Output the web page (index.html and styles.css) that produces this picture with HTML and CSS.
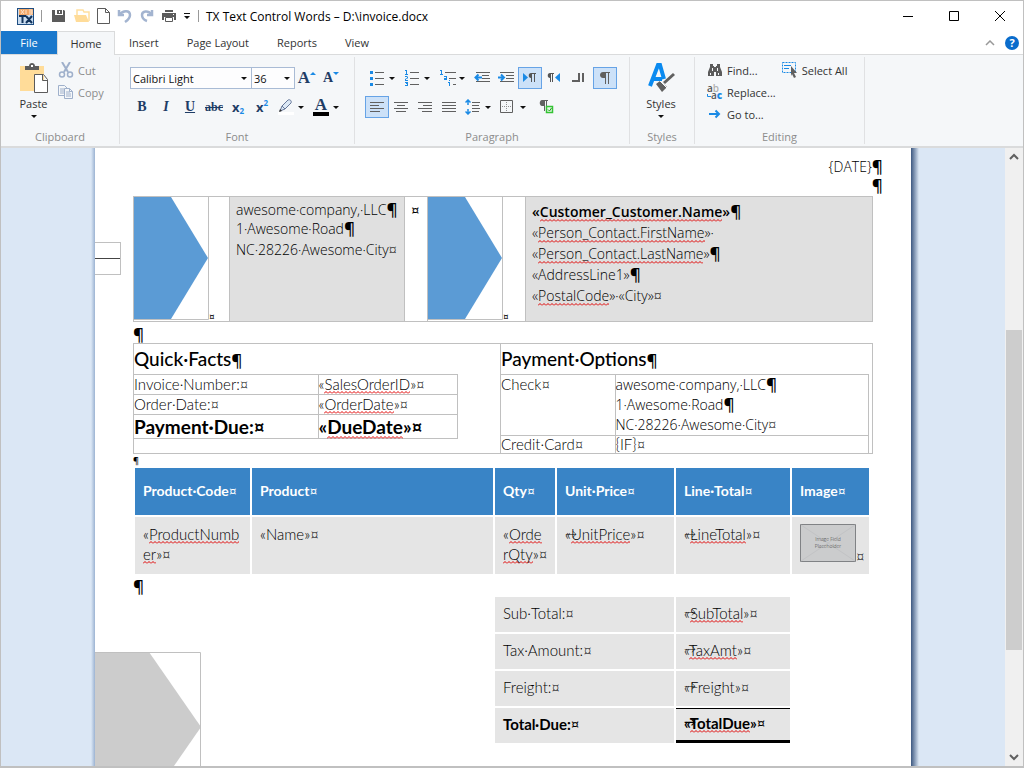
FILE: index.html
```html
<!DOCTYPE html>
<html lang="en">
  <head>
    <meta charset="utf-8" />
    <meta name="viewport" content="width=device-width, initial-scale=1.0" />
    <title>TX Text Control Words</title>
    <link rel="stylesheet" href="styles.css">
  </head>
  <body>
    <div class="window">
      <header class="title-bar">
        <svg class="logo" width="17" height="17" viewBox="0 0 17 17">
          <rect x="0.5" y="0.5" width="16" height="16" fill="#c9dcf0" stroke="#1f4e82" />
          <rect x="2" y="1" width="14" height="6" fill="#f2a868" />
          <path d="M4 2l3 4M7 2L4 6M9 2v4M12 2h3v4h-3M12 4h3" stroke="#fbe3cd" fill="none" />
          <path d="M2 8h7M5.500 8v7M9 8l6 7M15 8l-6 7" stroke="#12345c" stroke-width="2" fill="none" />
        </svg>
        <span class="divider"></span>
        <div class="quick-access">
          <button type="button" aria-label="Save">
            <svg width="16" height="16" viewBox="0 0 16 16"><path d="M1 2h3v5h8V2h1l1 1v11H1zM6 2h5v4H6z" fill="#5b5b5b" /><path d="M8 3h1v2H8z" fill="#fff" /></svg>
          </button>
          <button type="button" aria-label="Open">
            <svg width="18" height="16" viewBox="0 0 18 16"><path d="M4 7V2h6l1 2h5v9" fill="none" stroke="#ffe0a0" stroke-width="1.500" /><path d="M1 7h12l3 7H3z" fill="#ffdc99" /></svg>
          </button>
          <button type="button" aria-label="New">
            <svg width="14" height="16" viewBox="0 0 14 16"><path d="M.5 .5h8l4 4v11H.5zM8.500 .5v4h4" fill="#fff" stroke="#5b5b5b" /></svg>
          </button>
          <button type="button" aria-label="Undo">
            <svg width="16" height="16" viewBox="0 0 16 16"><path d="M2 2v5h5M2.500 6.500C6 2 13 2 13 7c0 3-2 5-5 7" fill="none" stroke="#a3b4d0" stroke-width="2.500" /></svg>
          </button>
          <button type="button" aria-label="Redo">
            <svg width="16" height="16" viewBox="0 0 16 16"><path d="M13 2v5H8M12.500 6.500C9 2 3 3 3 7c0 3 2 5 5 6" fill="none" stroke="#a3b4d0" stroke-width="2.500" /></svg>
          </button>
          <button type="button" aria-label="Print">
            <svg width="16" height="16" viewBox="0 0 16 16"><path d="M4 2h8v2H4zM1 5h14v7h-2V9H3v3H1z" fill="#5b5b5b" /><path d="M4.500 9.500h7v4h-7z" fill="#fff" stroke="#5b5b5b" /><path d="M12 6h1v1h-1z" fill="#fff" /></svg>
          </button>
          <button type="button" aria-label="Customize">
            <svg width="8" height="8" viewBox="0 0 8 8"><path d="M1 1h6v1H1zM1 4h6L4 7z" fill="#111" /></svg>
          </button>
        </div>
        <span class="divider"></span>
        <h1>TX Text Control Words – D:\invoice.docx</h1>
        <div class="window-buttons">
          <button type="button" aria-label="Minimize"><svg width="10" height="10"><path d="M0 5.500h10" stroke="#000" /></svg></button>
          <button type="button" aria-label="Maximize"><svg width="10" height="10"><path d="M.5 .5h9v9h-9z" fill="none" stroke="#000" /></svg></button>
          <button type="button" aria-label="Close"><svg width="10" height="10"><path d="M0 0l10 10M10 0L0 10" stroke="#000" /></svg></button>
        </div>
      </header>

      <nav class="tabs">
        <button type="button" class="file-tab">File</button>
        <button type="button" class="home-tab">Home</button>
        <button type="button">Insert</button>
        <button type="button">Page Layout</button>
        <button type="button">Reports</button>
        <button type="button">View</button>
        <div class="tabs-end">
          <button type="button" aria-label="Collapse ribbon"><svg width="10" height="6"><path d="M1 5l4-4 4 4" fill="none" stroke="#999" stroke-width="1.500" /></svg></button>
          <button type="button" class="help" aria-label="Help">?</button>
        </div>
      </nav>

      <div class="ribbon">
        <section class="group clipboard">
          <div class="group-body">
            <button type="button" class="big">
              <svg width="30" height="32" viewBox="0 0 30 32">
                <path d="M1 4h24v25H1z" fill="#ffdc99" />
                <path d="M6 4h4c0-4 6-4 6 0h4v4H6z" fill="#5b5b5b" /><path d="M12 3h2v2h-2z" fill="#fff" />
                <path d="M15.500 12.500h9l4 5v13h-13zM23.500 12.500v6h5" fill="#fff" stroke="#5b5b5b" />
              </svg>
              Paste
              <i class="caret"></i>
            </button>
            <div class="stack disabled">
              <button type="button" disabled>
                <svg width="16" height="16" viewBox="0 0 16 16"><path d="M4 0l6 10M12 0L6 10" stroke="#9fb0cb" stroke-width="2" /><circle cx="4" cy="12.500" r="2.500" fill="none" stroke="#9fb0cb" stroke-width="1.500" /><circle cx="12" cy="12.500" r="2.500" fill="none" stroke="#9fb0cb" stroke-width="1.500" /></svg>
                Cut
              </button>
              <button type="button" disabled>
                <svg width="16" height="16" viewBox="0 0 16 16"><path d="M.5 1.500h6l3 3v7h-9zM2 5h4M2 7h4M2 9h4" fill="#f5f7f9" stroke="#9fb0cb" /><path d="M6.500 4.500h5l3 3v7h-8zM8 8h4M8 10h5M8 12h5M11.500 4.500v3h3" fill="#f5f7f9" stroke="#9fb0cb" /></svg>
                Copy
              </button>
            </div>
          </div>
          <h2>Clipboard</h2>
        </section>

        <section class="group font">
          <div class="group-body rows">
            <div class="row">
              <div class="combos">
                <select class="font-name" aria-label="Font"><option>Calibri Light</option></select>
                <select class="font-size" aria-label="Font size"><option>36</option></select>
              </div>
              <div class="tools">
                <button type="button" class="tool glyph grow" aria-label="Grow font">A<svg width="6" height="4"><path d="M0 3l3-3 3 3z" fill="#1a8ae5" /></svg></button>
                <button type="button" class="tool glyph shrink" aria-label="Shrink font">A<svg width="6" height="4"><path d="M0 0h6L3 3z" fill="#1a8ae5" /></svg></button>
              </div>
            </div>
            <div class="row">
              <button type="button" class="tool glyph">B</button>
              <button type="button" class="tool glyph italic">I</button>
              <button type="button" class="tool glyph underline">U</button>
              <button type="button" class="tool glyph strike">abc</button>
              <button type="button" class="tool glyph script" aria-label="Subscript">x<sub>2</sub></button>
              <button type="button" class="tool glyph script" aria-label="Superscript">x<sup>2</sup></button>
              <button type="button" class="split" aria-label="Highlight color">
                <svg width="16" height="16" viewBox="0 0 16 16"><path d="M0 13h16v3H0z" fill="#fff" /><path d="M2 12l2-5 6-6c2-1 4 1 3 3L7 10z" fill="#dce8f5" stroke="#66789a" /><path d="M4 7l3 3" stroke="#66789a" /><path d="M1 13l1-3 2 2z" fill="#333" /></svg>
                <i class="caret"></i>
              </button>
              <button type="button" class="split" aria-label="Font color">
                <span class="glyph font-color">A</span>
                <i class="caret"></i>
              </button>
            </div>
          </div>
          <h2>Font</h2>
        </section>

        <section class="group paragraph">
          <div class="group-body rows">
            <div class="row">
              <button type="button" class="split" aria-label="Bullets">
                <svg width="16" height="16" viewBox="0 0 16 16"><path d="M6 2.500h9M6 8.500h9M6 14.500h9" stroke="#606060" /><path d="M1 1h3v3H1zM1 7h3v3H1zM1 13h3v3H1z" fill="#1a8ae5" /></svg>
                <i class="caret"></i>
              </button>
              <button type="button" class="split" aria-label="Numbering">
                <svg width="16" height="16" viewBox="0 0 16 16"><path d="M6 2.500h9M6 8.500h9M6 14.500h9" stroke="#606060" /><path d="M1 0h2v4h1v1H1V4h1V1H1zM1 6h2l1 1v1L3 9H2v1h2v1H1V9l2-1V7H1zM1 12h3v4H1v-1h2v-1H2v-1H1z" fill="#1a8ae5" /></svg>
                <i class="caret"></i>
              </button>
              <button type="button" class="split" aria-label="Multilevel list">
                <svg width="18" height="16" viewBox="0 0 18 16"><path d="M6 2.500h11M10 8.500h7M14 14.500h3" stroke="#606060" /><path d="M1 0h2v4h1v1H1V4h1V1H1zM5 6h3v4H5V8h2V7H5zM10 10h1v1h-1zM9 12h2v4h-1v-3H9z" fill="#1a8ae5" /></svg>
                <i class="caret"></i>
              </button>
              <div class="tools">
                <button type="button" class="tool" aria-label="Decrease indent">
                  <svg width="16" height="12" viewBox="0 0 16 12"><path d="M2 .5h14M8 3.500h7M8 6.500h8M2 9.500h14" stroke="#606060" /><path d="M8 5.500H2M4.500 2.500l-3 3 3 3" fill="none" stroke="#1a8ae5" stroke-width="2" /></svg>
                </button>
                <button type="button" class="tool" aria-label="Increase indent">
                  <svg width="16" height="12" viewBox="0 0 16 12"><path d="M2 .5h14M8 3.500h8M8 6.500h8M2 9.500h14" stroke="#606060" /><path d="M0 5.500h6M3 2.500l3 3-3 3" fill="none" stroke="#1a8ae5" stroke-width="2" /></svg>
                </button>
                <button type="button" class="tool active" aria-label="Left to right">
                  <svg width="14" height="10" viewBox="0 0 14 10"><path d="M0 0l5 4.500L0 9z" fill="#1a8ae5" /><path d="M13 .5H8.500V9M11.500 1v8" fill="none" stroke="#555" /><path d="M9 0H8C5 0 5 5 8 5h1z" fill="#555" /></svg>
                </button>
                <button type="button" class="tool" aria-label="Right to left">
                  <svg width="14" height="10" viewBox="0 0 14 10"><path d="M13 0L8 4.500 13 9z" fill="#1a8ae5" /><path d="M7 .5H3.500V9M5.500 1v8" fill="none" stroke="#555" /><path d="M4 0H3C0 0 0 5 3 5h1z" fill="#555" /></svg>
                </button>
                <button type="button" class="tool" aria-label="Tabs">
                  <svg width="12" height="10" viewBox="0 0 12 10"><path d="M0 8h7V0M11 0v9" fill="none" stroke="#606060" stroke-width="2" /></svg>
                </button>
              </div>
              <button type="button" class="tool active last" aria-label="Show marks">
                <svg width="12" height="14" viewBox="0 0 12 14"><path d="M11 1.500H5M6.500 2v11M9.500 2v11" stroke="#606060" fill="none" /><path d="M7 1H4C0 1 0 7 4 7h3z" fill="#606060" /></svg>
              </button>
            </div>
            <div class="row">
              <button type="button" class="tool active" aria-label="Align left"><svg width="15" height="12"><path d="M0 1.500h14M0 4.500h9M0 7.500h14M0 10.500h10" stroke="#606060" /></svg></button>
              <button type="button" class="tool" aria-label="Center"><svg width="15" height="12"><path d="M0 1.500h14M3 4.500h8M0 7.500h14M2 10.500h10" stroke="#606060" /></svg></button>
              <button type="button" class="tool" aria-label="Align right"><svg width="15" height="12"><path d="M0 1.500h14M5 4.500h9M0 7.500h14M4 10.500h10" stroke="#606060" /></svg></button>
              <button type="button" class="tool" aria-label="Justify"><svg width="15" height="12"><path d="M0 1.500h14M0 4.500h14M0 7.500h14M0 10.500h14" stroke="#606060" /></svg></button>
              <button type="button" class="split" aria-label="Line spacing">
                <svg width="16" height="16" viewBox="0 0 16 16"><path d="M7 3.500h8M7 6.500h7M7 9.500h8M7 12.500h7" stroke="#606060" /><path d="M3 1v5M3 10v5M.5 3.500L3 1l2.500 2.500M.5 12.500L3 15l2.500-2.500" fill="none" stroke="#1a8ae5" stroke-width="1.500" /></svg>
                <i class="caret"></i>
              </button>
              <button type="button" class="split" aria-label="Borders">
                <svg width="14" height="14" viewBox="0 0 14 14"><path d="M.5 .5h12v12H.5z" fill="none" stroke="#606060" /><path d="M6.500 2v10M2 6.500h10" stroke="#909090" stroke-dasharray="1 1" /></svg>
                <i class="caret"></i>
              </button>
              <button type="button" class="tool last" aria-label="Paragraph dialog">
                <svg width="15" height="14" viewBox="0 0 15 14"><path d="M9 .5H4M5.500 1v10M7.500 1v5" stroke="#606060" /><path d="M5 0H3C0 0 0 6 3 6h2z" fill="#606060" /><path d="M7.500 6.500h6v6h-6z" fill="#e6f8e6" stroke="#34c334" stroke-width="1.500" /><path d="M9 9.500l1.500 1.500 2-3" fill="none" stroke="#1f9a1f" /></svg>
              </button>
            </div>
          </div>
          <h2>Paragraph</h2>
        </section>

        <section class="group styles">
          <div class="group-body">
            <button type="button" class="big">
              <svg width="30" height="32" viewBox="0 0 30 32">
                <path d="M4 24L12 3h2l4 14M7 17h9" fill="none" stroke="#0a8af0" stroke-width="4" />
                <path d="M28 12L18 21" stroke="#606060" stroke-width="3" /><path d="M13 20l7 7M10 22l4-3 7 6-5 5z" fill="#606060" />
                <path d="M14 19l7 7" stroke="#f5f7f9" />
              </svg>
              Styles
              <i class="caret"></i>
            </button>
          </div>
          <h2>Styles</h2>
        </section>

        <section class="group editing">
          <div class="group-body">
            <div class="stack">
              <button type="button">
                <svg width="16" height="16" viewBox="0 0 16 16"><path d="M3 2h3v2h1v1h2V4h1V2h3v3l2 5v4H9v-4H7v4H1v-4l2-5z" fill="#5b5b5b" /><path d="M3.500 11v2M11.500 11v2M5.500 6v3M10.500 6v3" stroke="#f5f7f9" /></svg>
                Find...
              </button>
              <button type="button">
                <span class="replace-icon"><span>a<i>b</i></span><span><svg width="4" height="5"><path d="M.5 0v2.500H4" fill="none" stroke="#1a8ae5" /></svg>a<b>c</b></span></span>
                Replace...
              </button>
              <button type="button">
                <svg width="16" height="16" viewBox="0 0 16 16"><path d="M2 8h9M8.500 4.500L12 8l-3.500 3.500" fill="none" stroke="#1a8ae5" stroke-width="2" /></svg>
                Go to...
              </button>
            </div>
            <div class="stack">
              <button type="button">
                <svg width="16" height="16" viewBox="0 0 16 16"><path d="M.5 .5h13v10H.5z" fill="none" stroke="#1a8ae5" stroke-dasharray="2 1" /><path d="M2 3.500h7M2 6.500h5" stroke="#1a8ae5" /><path d="M9 4l6 7h-3l2 4-2 1-2-4-1 2z" fill="#606060" /></svg>
                Select All
              </button>
            </div>
          </div>
          <h2>Editing</h2>
        </section>
      </div>

      <main class="workspace">
        <div class="canvas">
          <article class="page">
            <p class="date">{DATE}<b class="mark">¶</b></p>
            <p class="date"><b class="mark">¶</b></p>

            <div class="frame-mark"></div>

            <table class="addresses">
              <colgroup><col class="arrow-col"><col class="from-col"><col class="gap-col"><col class="arrow-col wide"><col></colgroup>
              <tr>
                <td class="picture">
                  <svg width="75" height="123" viewBox="0 0 75 123"><path d="M0 0h37l37 61-37 61H0z" fill="#5b9bd5" /><path d="M74.500 0v122.500H0" fill="none" stroke="#c0c0c0" /></svg><span class="small">¤</span>
                </td>
                <td class="shaded from">
                  <p>awesome·company,·LLC<b class="mark">¶</b></p>
                  <p>1·Awesome·Road<b class="mark">¶</b></p>
                  <p>NC·28226·Awesome·City¤</p>
                </td>
                <td class="gap">¤</td>
                <td class="picture">
                  <svg width="75" height="123" viewBox="0 0 75 123"><path d="M0 0h37l37 61-37 61H0z" fill="#5b9bd5" /><path d="M74.500 0v122.500H0" fill="none" stroke="#c0c0c0" /></svg><span class="small">¤</span>
                </td>
                <td class="shaded to">
                  <p><b>«<u>Customer_Customer.Name</u>»</b><b class="mark">¶</b></p>
                  <p>«<u>Person_Contact.FirstName</u>»·</p>
                  <p>«<u>Person_Contact.LastName</u>»<b class="mark">¶</b></p>
                  <p>«AddressLine1»<b class="mark">¶</b></p>
                  <p>«<u>PostalCode</u>»·«City»¤</p>
                </td>
              </tr>
            </table>

            <p class="blank"><b class="mark">¶</b></p>

            <table class="facts">
              <colgroup><col class="facts-col"><col></colgroup>
              <tr>
                <td>
                  <h3>Quick·Facts<b class="mark">¶</b></h3>
                  <table class="inner quick">
                    <colgroup><col class="quick-label"><col></colgroup>
                    <tr><td>Invoice·Number:¤</td><td>«<u>SalesOrderID</u>»¤</td></tr>
                    <tr><td>Order·Date:¤</td><td>«<u>OrderDate</u>»¤</td></tr>
                    <tr class="due"><td>Payment·Due:¤</td><td>«<u>DueDate</u>»¤</td></tr>
                  </table>
                </td>
                <td>
                  <h3>Payment·Options<b class="mark">¶</b></h3>
                  <table class="inner options">
                    <colgroup><col class="option-label"><col></colgroup>
                    <tr>
                      <td>Check¤</td>
                      <td class="address">
                        <p>awesome·company,·LLC<b class="mark">¶</b></p>
                        <p>1·Awesome·Road<b class="mark">¶</b></p>
                        <p>NC·28226·Awesome·City¤</p>
                      </td>
                    </tr>
                    <tr><td>Credit·Card¤</td><td>{IF}¤</td></tr>
                  </table>
                </td>
              </tr>
            </table>

            <p class="blank tiny"><b class="mark">¶</b></p>

            <table class="items">
              <colgroup><col class="code-col"><col><col class="qty-col"><col class="price-col"><col class="total-col"><col class="image-col"></colgroup>
              <tr>
                <th>Product·Code<i>¤</i></th>
                <th>Product<i>¤</i></th>
                <th>Qty<i>¤</i></th>
                <th>Unit·Price<i>¤</i></th>
                <th>Line·Total<i>¤</i></th>
                <th>Image<i>¤</i></th>
              </tr>
              <tr>
                <td>«<u>ProductNumb</u><br><u>er</u>»¤</td>
                <td>«Name»¤</td>
                <td>«<u>Orde</u><br><u>rQty</u>»¤</td>
                <td><span class="tab-mark">→</span>«<u>UnitPrice</u>»¤</td>
                <td><span class="tab-mark">→</span>«<u>LineTotal</u>»¤</td>
                <td class="image-cell">
                  <svg width="56" height="38" viewBox="0 0 56 38">
                    <path d="M.5 .5h55v37H.5z" fill="#cbcccd" stroke="#808285" />
                    <path d="M1 1l54 36M55 1L1 37" stroke="#c2c3c5" />
                    <text x="28" y="17">Image Field</text>
                    <text x="28" y="24">Placeholder</text>
                  </svg>¤
                </td>
              </tr>
            </table>

            <p class="blank before-totals"><b class="mark">¶</b></p>

            <table class="totals">
              <colgroup><col><col class="total-col"></colgroup>
              <tr><td>Sub·Total:¤</td><td><span class="tab-mark">→</span>«<u>SubTotal</u>»¤</td></tr>
              <tr><td>Tax·Amount:¤</td><td><span class="tab-mark">→</span>«<u>TaxAmt</u>»¤</td></tr>
              <tr><td>Freight:¤</td><td><span class="tab-mark">→</span>«Freight»¤</td></tr>
              <tr class="total-due"><td>Total·Due:<i>¤</i></td><td><span class="tab-mark">→</span>«<u>TotalDue</u>»<i>¤</i></td></tr>
            </table>

            <svg class="footer-shape" width="106" height="150" viewBox="0 0 106 150">
              <path d="M0 0h54l52 75-52 75H0z" fill="#ccc" />
              <path d="M0 .5h105.500V150" fill="none" stroke="#c0c0c0" />
            </svg>
          </article>
        </div>
        <div class="scrollbar">
          <svg width="10" height="18"><path d="M1 11l4-4 4 4" fill="none" stroke="#606060" stroke-width="2" /></svg>
          <div class="before"></div>
          <div class="thumb"></div>
          <div class="after"></div>
          <svg width="10" height="18"><path d="M1 7l4 4 4-4" fill="none" stroke="#606060" stroke-width="2" /></svg>
        </div>
      </main>
    </div>
  </body>
</html>
```

FILE: styles.css
```css
:root {
  --ribbon: #f5f7f9;
  --line: #dadbdc;
  --ink: #333333;
  --muted: #8c8c8c;
  --blue: #1a78cc;
  --cell: #e5e5e5;
  --grid: #c0c0c0;
}

* {
  box-sizing: border-box;
}

body {
  margin: 0;
  font-family: "Open Sans", "Noto Sans", sans-serif;
  font-size: 11px;
  color: var(--ink);
}

h1,
h2,
h3,
p {
  margin: 0;
  font-weight: normal;
}

button {
  display: flex;
  align-items: center;
  justify-content: center;
  margin: 0;
  padding: 0;
  border: none;
  background: none;
  font: inherit;
  color: inherit;
  cursor: pointer;
}

svg {
  flex: none;
}

.window {
  display: flex;
  flex-direction: column;
  height: 100vh;
  border: 1px solid #c0c0c0;
  border-bottom-width: 2px;
  background-color: #fff;
}

/* title bar */

.title-bar {
  display: flex;
  align-items: center;
  height: 30px;
  padding-left: 16px;
}

.divider {
  width: 1px;
  height: 12px;
  margin: 0 7px;
  background-color: #999;
}

.quick-access {
  display: flex;
  align-items: center;
  gap: 6px;
  padding-left: 2px;
}

.title-bar h1 {
  font-size: 12px;
  color: #000;
}

.window-buttons {
  display: flex;
  margin-left: auto;
}

.window-buttons button {
  width: 46px;
  height: 30px;
}

/* tabs */

.tabs {
  display: flex;
  height: 24px;
  border-bottom: 1px solid var(--line);
}

.tabs > button {
  padding: 0 14px;
}

.tabs > .file-tab {
  width: 56px;
  height: 23px;
  background-color: var(--blue);
  color: #fff;
}

.tabs > .home-tab {
  width: 58px;
  height: 24px;
  border: 1px solid var(--line);
  border-bottom: none;
  background-color: var(--ribbon);
}

.tabs-end {
  display: flex;
  align-items: center;
  gap: 10px;
  margin-left: auto;
  padding-right: 4px;
}

.help {
  width: 14px;
  height: 14px;
  border-radius: 50%;
  background-color: #0a6ccc;
  color: #fff;
  font-weight: bold;
}

/* ribbon */

.ribbon {
  display: flex;
  height: 93px;
  padding-top: 2px;
  border-bottom: 2px solid var(--line);
  background-color: var(--ribbon);
}

.group {
  display: flex;
  flex-direction: column;
  justify-content: space-between;
  height: 87px;
  border-right: 1px solid #e0e1e3;
}

.group h2 {
  font-size: 11px;
  line-height: 14px;
  text-align: center;
  color: var(--muted);
}

.clipboard {
  width: 119px;
}

.font {
  width: 235px;
}

.paragraph {
  width: 275px;
}

.styles {
  width: 65px;
}

.editing {
  width: 170px;
}

.group-body {
  display: flex;
}

.rows {
  flex-direction: column;
  gap: 7px;
  padding: 10px 0 0 10px;
}

.row,
.tools,
.combos {
  display: flex;
}

.big {
  flex-direction: column;
  width: 62px;
  padding-top: 5px;
  line-height: 19px;
}

.big .caret {
  margin-top: 2px;
}

.clipboard .big {
  width: 57px;
  padding-left: 8px;
}

.stack {
  display: flex;
  flex-direction: column;
  padding-top: 2px;
}

.editing .stack {
  padding-left: 12px;
}

.editing .stack + .stack {
  padding-left: 6px;
}

.stack button {
  justify-content: flex-start;
  gap: 4px;
  height: 22px;
}

.disabled button {
  color: var(--muted);
}

.replace-icon {
  width: 16px;
  font-size: 10px;
  line-height: 7px;
  font-weight: 600;
  color: #555;
}

.replace-icon > span {
  display: block;
  text-align: left;
}

.replace-icon i {
  font-style: normal;
  color: #b0b0b0;
}

.replace-icon b {
  color: #1a8ae5;
}

.caret {
  border: 3px solid transparent;
  border-top-color: #111;
  border-bottom: none;
}

select {
  height: 22px;
  padding: 0 2px;
  border: 1px solid #a9bbd5;
  border-radius: 0;
  background: #fdfdfe url("data:image/svg+xml,%3Csvg xmlns='http://www.w3.org/2000/svg' width='6' height='3'%3E%3Cpath d='M0 0h6L3 3z' fill='%23111'/%3E%3C/svg%3E") no-repeat right 4px center;
  appearance: none;
  font: inherit;
  color: #111;
}

.font-name {
  width: 122px;
}

.font-size {
  width: 44px;
  margin-left: -1px;
}

.tool {
  width: 24px;
  height: 22px;
}

.tool.active {
  border: 1px solid #66a3e6;
  background-color: #cce1f8;
}

.tool.last {
  margin-left: 3px;
}

.split {
  width: 35px;
  height: 22px;
  padding: 0 5px 0 4px;
  justify-content: space-between;
}

.glyph {
  font-family: "Liberation Serif", serif;
  font-size: 14px;
  font-weight: bold;
  color: #1f3d66;
}

.italic {
  font-style: italic;
}

.underline {
  text-decoration: underline;
}

.strike {
  font-size: 12px;
  text-decoration: line-through;
}

.script {
  font-family: "Open Sans", sans-serif;
  font-size: 13px;
}

.script sub,
.script sup {
  font-size: 8px;
  line-height: 8px;
  color: #1a8ae5;
}

.script sub {
  align-self: flex-end;
  margin-bottom: 3px;
}

.script sup {
  align-self: flex-start;
  margin-top: 3px;
}

.grow {
  font-size: 17px;
}

.shrink {
  font-size: 14px;
}

.grow svg,
.shrink svg {
  align-self: flex-start;
  margin-top: 5px;
}

.font-color {
  width: 16px;
  border-bottom: 4px solid #000;
  font-size: 17px;
  line-height: 14px;
}

/* document area */

.workspace {
  display: flex;
  flex: 1;
  min-height: 0;
}

.canvas {
  display: flex;
  flex: 1;
  justify-content: center;
  min-width: 0;
  overflow: hidden;
  background-color: #dbe7f5;
}

.page {
  position: relative;
  flex: 0 1 818px;
  height: 1056px;
  padding: 10px 38px 0;
  border: 1px solid #000;
  border-top: none;
  background-color: #fff;
  font-family: Lato, sans-serif;
  font-size: 15px;
  color: #000;
}

.page::before,
.page::after {
  content: "";
  position: absolute;
  top: 0;
  bottom: 0;
}

.page::before {
  right: 100%;
  width: 4px;
  background: linear-gradient(to left, #9cb3d2, #dbe7f5);
}

.page::after {
  left: 100%;
  width: 8px;
  background: linear-gradient(to right, #3d5880, #dbe7f5);
}

.page table {
  width: 100%;
  border-collapse: collapse;
  table-layout: fixed;
}

.page td {
  padding: 0;
  vertical-align: top;
}

.page u {
  padding-bottom: 1px;
  text-decoration: none;
  background: url("data:image/svg+xml,%3Csvg xmlns='http://www.w3.org/2000/svg' width='4' height='3'%3E%3Cpath d='M0 2.500L2 .5l2 2' fill='none' stroke='%23e00000'/%3E%3C/svg%3E") repeat-x left bottom;
}

.mark {
  font-family: "Open Sans", sans-serif;
  font-size: 17px;
  font-weight: 600;
  line-height: 1px;
}

.date {
  height: 19px;
  margin-right: -10px;
  line-height: 18px;
  text-align: right;
}

.date,
.addresses p,
.address p {
  font-family: "Open Sans", sans-serif;
  font-size: 14px;
  font-weight: 300;
}

.blank {
  height: 21px;
  line-height: 24px;
}

.blank.tiny {
  height: 12px;
  line-height: 8px;
}

.blank.before-totals {
  height: 19px;
  line-height: 20px;
}

.tiny .mark {
  font-size: 9px;
}

.addresses td {
  height: 125px;
  border: 1px solid var(--grid);
}

.arrow-col {
  width: 96px;
}

.arrow-col.wide {
  width: 98px;
}

.from-col {
  width: 175px;
}

.gap-col {
  width: 23px;
}

.addresses .picture {
  line-height: 0;
}

.picture .small {
  font-size: 10px;
  line-height: 10px;
}

.addresses .shaded {
  padding: 4px 6px;
  background-color: #e0e0e0;
}

.addresses .from {
  padding-top: 3px;
}

.from p {
  line-height: 19px;
}

.from p:last-child {
  line-height: 24px;
}

.to p {
  line-height: 21px;
}

.to b:not(.mark) {
  font-weight: 600;
}

.addresses .gap {
  padding: 4px 6px;
  line-height: 19px;
}

.facts-col {
  width: 367px;
}

.facts > tbody > tr > td {
  height: 109px;
  border: 1px solid var(--grid);
}

.facts h3 {
  height: 30px;
  font-size: 19px;
  font-weight: 500;
  line-height: 30px;
}

.inner td,
.items td,
.totals td {
  font-weight: 300;
}

.inner td {
  border: 1px solid var(--grid);
  line-height: 19px;
}

.page .inner tr > td:first-child {
  border-left: none;
}

.page .quick {
  width: 324px;
}

.quick-label {
  width: 184px;
}

.page .options {
  width: 368px;
}

.option-label {
  width: 114px;
}

.address p {
  line-height: 20px;
}

.options tr:last-child td {
  line-height: 17px;
  border-bottom: none;
}

.inner .due td {
  font-size: 19px;
  font-weight: bold;
  line-height: 23px;
}

.page .items,
.page .totals {
  border-collapse: separate;
  border-spacing: 2px;
}

.page .items {
  width: calc(100% - 2px);
}

.items th,
.items td,
.totals td {
  padding: 0 8px;
  text-align: left;
}

.items th {
  height: 47px;
  padding-bottom: 2px;
  background-color: #3984c6;
  font-size: 14px;
  color: #fff;
}

.items i,
.totals i {
  font-style: normal;
  font-weight: normal;
}

.page .items td {
  height: 57px;
  padding-top: 7px;
  background-color: var(--cell);
  line-height: 20px;
  white-space: nowrap;
}

.code-col {
  width: 115px;
}

.qty-col {
  width: 60px;
}

.price-col {
  width: 117px;
}

.total-col {
  width: 114px;
}

.image-col {
  width: 77px;
}

.image-cell text {
  font-family: "Open Sans", sans-serif;
  font-size: 5px;
  text-anchor: middle;
  fill: #333;
}

.tab-mark {
  position: absolute;
  font-size: 12px;
}

.page .totals {
  width: 299px;
  margin-left: 360px;
}

.page .totals td {
  height: 35px;
  padding-bottom: 4px;
  background-color: var(--cell);
  vertical-align: middle;
}

.page .total-due td {
  font-weight: bold;
}

.page .total-due td:last-child {
  border-top: 1px solid #000;
  border-bottom: 3px solid #000;
}

/* shapes that float over the page */

.frame-mark {
  position: absolute;
  top: 94px;
  left: 0;
  width: 26px;
  height: 33px;
  border: 1px solid var(--grid);
  border-left: none;
  background: linear-gradient(#444, #444) no-repeat left center / 100% 1px;
}

.footer-shape {
  position: absolute;
  top: 504px;
  left: 0;
}

.scrollbar {
  display: flex;
  flex-direction: column;
  align-items: center;
  width: 18px;
  padding: 0 1px;
  background-color: #f0f0f0;
}

.before {
  flex: 164;
}

.thumb {
  flex: 319;
  width: 100%;
  background-color: #cdcdcd;
}

.after {
  flex: 98;
}
```
